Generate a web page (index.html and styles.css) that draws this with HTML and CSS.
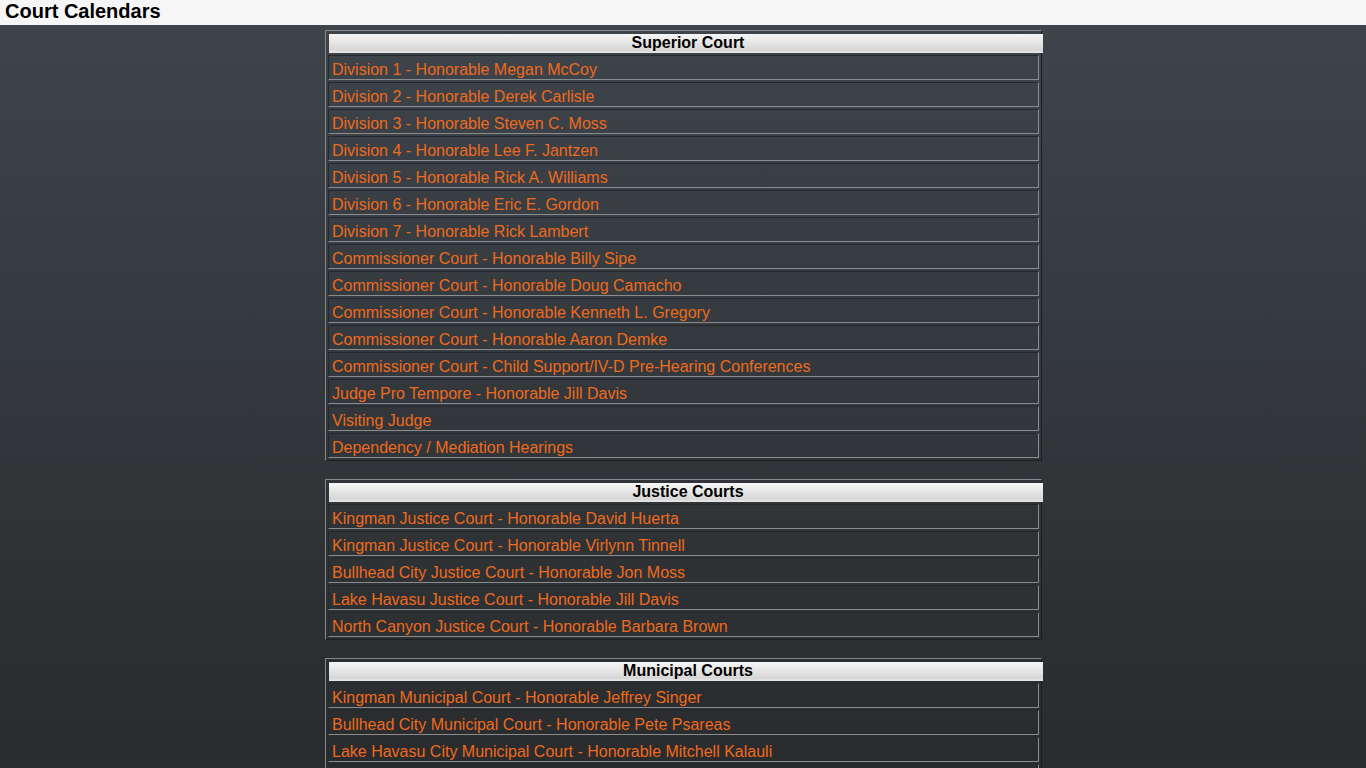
FILE: index.html
```html
<!DOCTYPE html>
<html lang="en">
<head>
<meta charset="utf-8">
<title>Court Calendars</title>
<link rel="stylesheet" href="styles.css">
</head>
<body>
<header class="titlebar"><h1 class="title">Court Calendars</h1></header>
<main class="content">
  <section class="court">
    <h2 class="court-head">Superior Court</h2>
    <ul class="court-list">
      <li class="court-row"><a href="#">Division 1 - Honorable Megan McCoy</a></li>
      <li class="court-row"><a href="#">Division 2 - Honorable Derek Carlisle</a></li>
      <li class="court-row"><a href="#">Division 3 - Honorable Steven C. Moss</a></li>
      <li class="court-row"><a href="#">Division 4 - Honorable Lee F. Jantzen</a></li>
      <li class="court-row"><a href="#">Division 5 - Honorable Rick A. Williams</a></li>
      <li class="court-row"><a href="#">Division 6 - Honorable Eric E. Gordon</a></li>
      <li class="court-row"><a href="#">Division 7 - Honorable Rick Lambert</a></li>
      <li class="court-row"><a href="#">Commissioner Court - Honorable Billy Sipe</a></li>
      <li class="court-row"><a href="#">Commissioner Court - Honorable Doug Camacho</a></li>
      <li class="court-row"><a href="#">Commissioner Court - Honorable Kenneth L. Gregory</a></li>
      <li class="court-row"><a href="#">Commissioner Court - Honorable Aaron Demke</a></li>
      <li class="court-row"><a href="#">Commissioner Court - Child Support/IV-D Pre-Hearing Conferences</a></li>
      <li class="court-row"><a href="#">Judge Pro Tempore - Honorable Jill Davis</a></li>
      <li class="court-row"><a href="#">Visiting Judge</a></li>
      <li class="court-row"><a href="#">Dependency / Mediation Hearings</a></li>
    </ul>
  </section>
  <section class="court">
    <h2 class="court-head">Justice Courts</h2>
    <ul class="court-list">
      <li class="court-row"><a href="#">Kingman Justice Court - Honorable David Huerta</a></li>
      <li class="court-row"><a href="#">Kingman Justice Court - Honorable Virlynn Tinnell</a></li>
      <li class="court-row"><a href="#">Bullhead City Justice Court - Honorable Jon Moss</a></li>
      <li class="court-row"><a href="#">Lake Havasu Justice Court - Honorable Jill Davis</a></li>
      <li class="court-row"><a href="#">North Canyon Justice Court - Honorable Barbara Brown</a></li>
    </ul>
  </section>
  <section class="court">
    <h2 class="court-head">Municipal Courts</h2>
    <ul class="court-list">
      <li class="court-row"><a href="#">Kingman Municipal Court - Honorable Jeffrey Singer</a></li>
      <li class="court-row"><a href="#">Bullhead City Municipal Court - Honorable Pete Psareas</a></li>
      <li class="court-row"><a href="#">Lake Havasu City Municipal Court - Honorable Mitchell Kalauli</a></li>
      <li class="court-row"><a href="#">Colorado City Municipal Court</a></li>
    </ul>
  </section>
</main>
</body>
</html>
```

FILE: styles.css
```css
html {
  background: #2a2c2e linear-gradient(#3e454b 0px, #292b2d 768px) fixed no-repeat;
  min-height: 100%;
}

body {
  margin: 0;
  font-family: "Liberation Sans", Arial, sans-serif;
}

.titlebar {
  background: #f6f6f6;
  height: 25px;
  display: flex;
  align-items: flex-start;
  padding-left: 5px;
}

.title {
  margin: 0;
  font-size: 20px;
  font-weight: bold;
  color: #000;
  line-height: 22px;
}

.content {
  padding-top: 5px;
  display: flex;
  flex-direction: column;
  align-items: center;
  gap: 18px;
}

.court {
  box-sizing: border-box;
  width: 717px;
  border: 1px solid;
  border-color: #85898d #1c1f21 #1c1f21 #85898d;
  padding: 2px;
  margin-left: 1px;
}

.court-head {
  margin: 1px -4px 0 1px;
  padding-left: 4px;
  height: 19px;
  line-height: 17px;
  font-size: 16px;
  font-weight: bold;
  text-align: center;
  color: #000;
  background: linear-gradient(#f6f6f6 0%, #e2e2e2 55%, #d6d6d6 85%, #e9e9e9 100%);
}

.court-list {
  list-style: none;
  margin: 2px 0 0;
  padding: 0;
  display: flex;
  flex-direction: column;
  gap: 2px;
}

.court-row {
  height: 19px;
  padding: 4px 0 0 3px;
  line-height: 19px;
  border: 1px solid;
  border-color: #25292c #8a8d90 #8a8d90 #25292c;
  font-size: 16px;
}

.court-row a {
  color: #ee6a1c;
  text-decoration: none;
}
```
